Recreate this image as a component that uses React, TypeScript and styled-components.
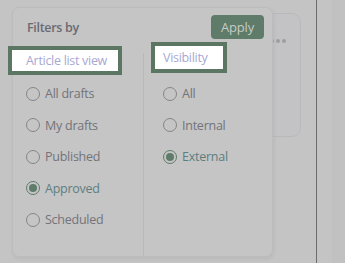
import React from "react";
import styled, { createGlobalStyle } from "styled-components";

const Global = createGlobalStyle`
  html, body { margin: 0; padding: 0; }
  body {
    width: 345px;
    height: 263px;
    overflow: hidden;
    background: #c4c4c4;
    font-family: "Segoe UI", "Open Sans", "Noto Sans", sans-serif;
  }
`;

const Page = styled.div`
  position: relative;
  display: flex;
  width: 345px;
  height: 263px;
`;

const Main = styled.div`
  flex: 0 0 316px;
  display: flex;
  justify-content: flex-end;
  align-items: flex-start;
  padding: 13px 15px 0 0;
  box-sizing: border-box;
`;

const Card = styled.div`
  width: 150px;
  height: 124px;
  border: 1px solid #b9b9bd;
  border-radius: 9px;
  background: #c3c3c6;
  box-sizing: border-box;
  display: flex;
  justify-content: flex-end;
  padding: 25px 14px 0 0;
`;

const Dots = styled.div`
  display: flex;
  gap: 2px;
  height: 4px;
`;

const Dot = styled.span`
  width: 4px;
  height: 4px;
  border-radius: 50%;
  background: #9c9ca2;
`;

const Rule = styled.div`
  flex: 0 0 1px;
  background: #6d6d6d;
`;

const Side = styled.div`
  flex: 1;
  display: flex;
`;

const SideStrip = styled.div<{ $shade: string }>`
  flex: ${(p) => (p.$shade === "a" ? "0 0 15px" : "1")};
  background: ${(p) => (p.$shade === "a" ? "#c4c4c4" : "#c1c1c2")};
`;

const Popup = styled.div`
  position: absolute;
  left: 12px;
  top: 7px;
  width: 261px;
  height: 250px;
  box-sizing: border-box;
  border: 1px solid #bcbcbc;
  border-radius: 7px;
  background: #c5c5c5;
  box-shadow: 1px 2px 4px rgba(0, 0, 0, 0.06);
  display: flex;
  flex-direction: column;
`;

const Header = styled.div`
  display: flex;
  align-items: center;
  justify-content: space-between;
  padding: 7px 8px 3px 14px;
`;

const HeaderTitle = styled.div`
  font-size: 12.5px;
  font-weight: 600;
  letter-spacing: -0.3px;
  color: #6b6b72;
`;

const ApplyButton = styled.button`
  width: 53px;
  height: 24px;
  border: none;
  border-radius: 4px;
  background: #5f7b69;
  color: #c3ccc6;
  font-family: inherit;
  font-size: 13px;
  letter-spacing: -0.2px;
  padding: 0;
`;

const Columns = styled.div`
  flex: 1;
  display: flex;
`;

const Column = styled.div<{ $width?: number }>`
  ${(p) => (p.$width ? `flex: 0 0 ${p.$width}px;` : "flex: 1;")}
  display: flex;
  flex-direction: column;
`;

const Divider = styled.div`
  flex: 0 0 1px;
  margin-top: 11px;
  background: #b9b9b9;
`;

const ColumnTitle = styled.div<{ $ml: number; $mt: number; $w: number; $h: number; $pl: number; $mb: number }>`
  margin: ${(p) => `${p.$mt}px 0 ${p.$mb}px ${p.$ml}px`};
  width: ${(p) => p.$w}px;
  height: ${(p) => p.$h}px;
  box-sizing: border-box;
  border: 4px solid #5b7764;
  background: #ffffff;
  padding-left: ${(p) => p.$pl}px;
  display: flex;
  align-items: center;
  font-size: 12.5px;
  letter-spacing: -0.3px;
  color: #a8a7d2;
`;

const Option = styled.label<{ $pl: number }>`
  height: 31.5px;
  display: flex;
  align-items: center;
  gap: 5px;
  padding-left: ${(p) => p.$pl}px;
  font-size: 12.5px;
  letter-spacing: -0.25px;
`;

const OptionText = styled.span<{ $checked: boolean }>`
  color: ${(p) => (p.$checked ? "#5d7e7f" : "#737379")};
`;

const Radio = styled.span<{ $checked: boolean }>`
  width: 14px;
  height: 14px;
  box-sizing: border-box;
  border-radius: 50%;
  border: 1px solid ${(p) => (p.$checked ? "#5f7b69" : "#858587")};
  display: flex;
  align-items: center;
  justify-content: center;
  &::after {
    content: "";
    width: 8px;
    height: 8px;
    border-radius: 50%;
    background: ${(p) => (p.$checked ? "#5f7b69" : "transparent")};
  }
`;

const listOptions = [
  { label: "All drafts", checked: false },
  { label: "My drafts", checked: false },
  { label: "Published", checked: false },
  { label: "Approved", checked: true },
  { label: "Scheduled", checked: false },
];

const visOptions = [
  { label: "All", checked: false },
  { label: "Internal", checked: false },
  { label: "External", checked: true },
];

export default function App() {
  return (
    <>
      <Global />
      <Page>
        <Main>
          <Card>
            <Dots>
              <Dot />
              <Dot />
              <Dot />
            </Dots>
          </Card>
        </Main>
        <Rule />
        <Side>
          <SideStrip $shade="a" />
          <SideStrip $shade="b" />
        </Side>
        <Popup>
          <Header>
            <HeaderTitle>Filters by</HeaderTitle>
            <ApplyButton>Apply</ApplyButton>
          </Header>
          <Columns>
            <Column $width={130}>
              <ColumnTitle $ml={-5} $mt={4} $w={114} $h={29} $pl={14} $mb={3}>
                Article list view
              </ColumnTitle>
              {listOptions.map((o) => (
                <Option key={o.label} $pl={13}>
                  <Radio $checked={o.checked} />
                  <OptionText $checked={o.checked}>{o.label}</OptionText>
                </Option>
              ))}
            </Column>
            <Divider />
            <Column>
              <ColumnTitle $ml={7} $mt={0} $w={76} $h={31} $pl={8} $mb={5}>
                Visibility
              </ColumnTitle>
              {visOptions.map((o) => (
                <Option key={o.label} $pl={19}>
                  <Radio $checked={o.checked} />
                  <OptionText $checked={o.checked}>{o.label}</OptionText>
                </Option>
              ))}
            </Column>
          </Columns>
        </Popup>
      </Page>
    </>
  );
}
